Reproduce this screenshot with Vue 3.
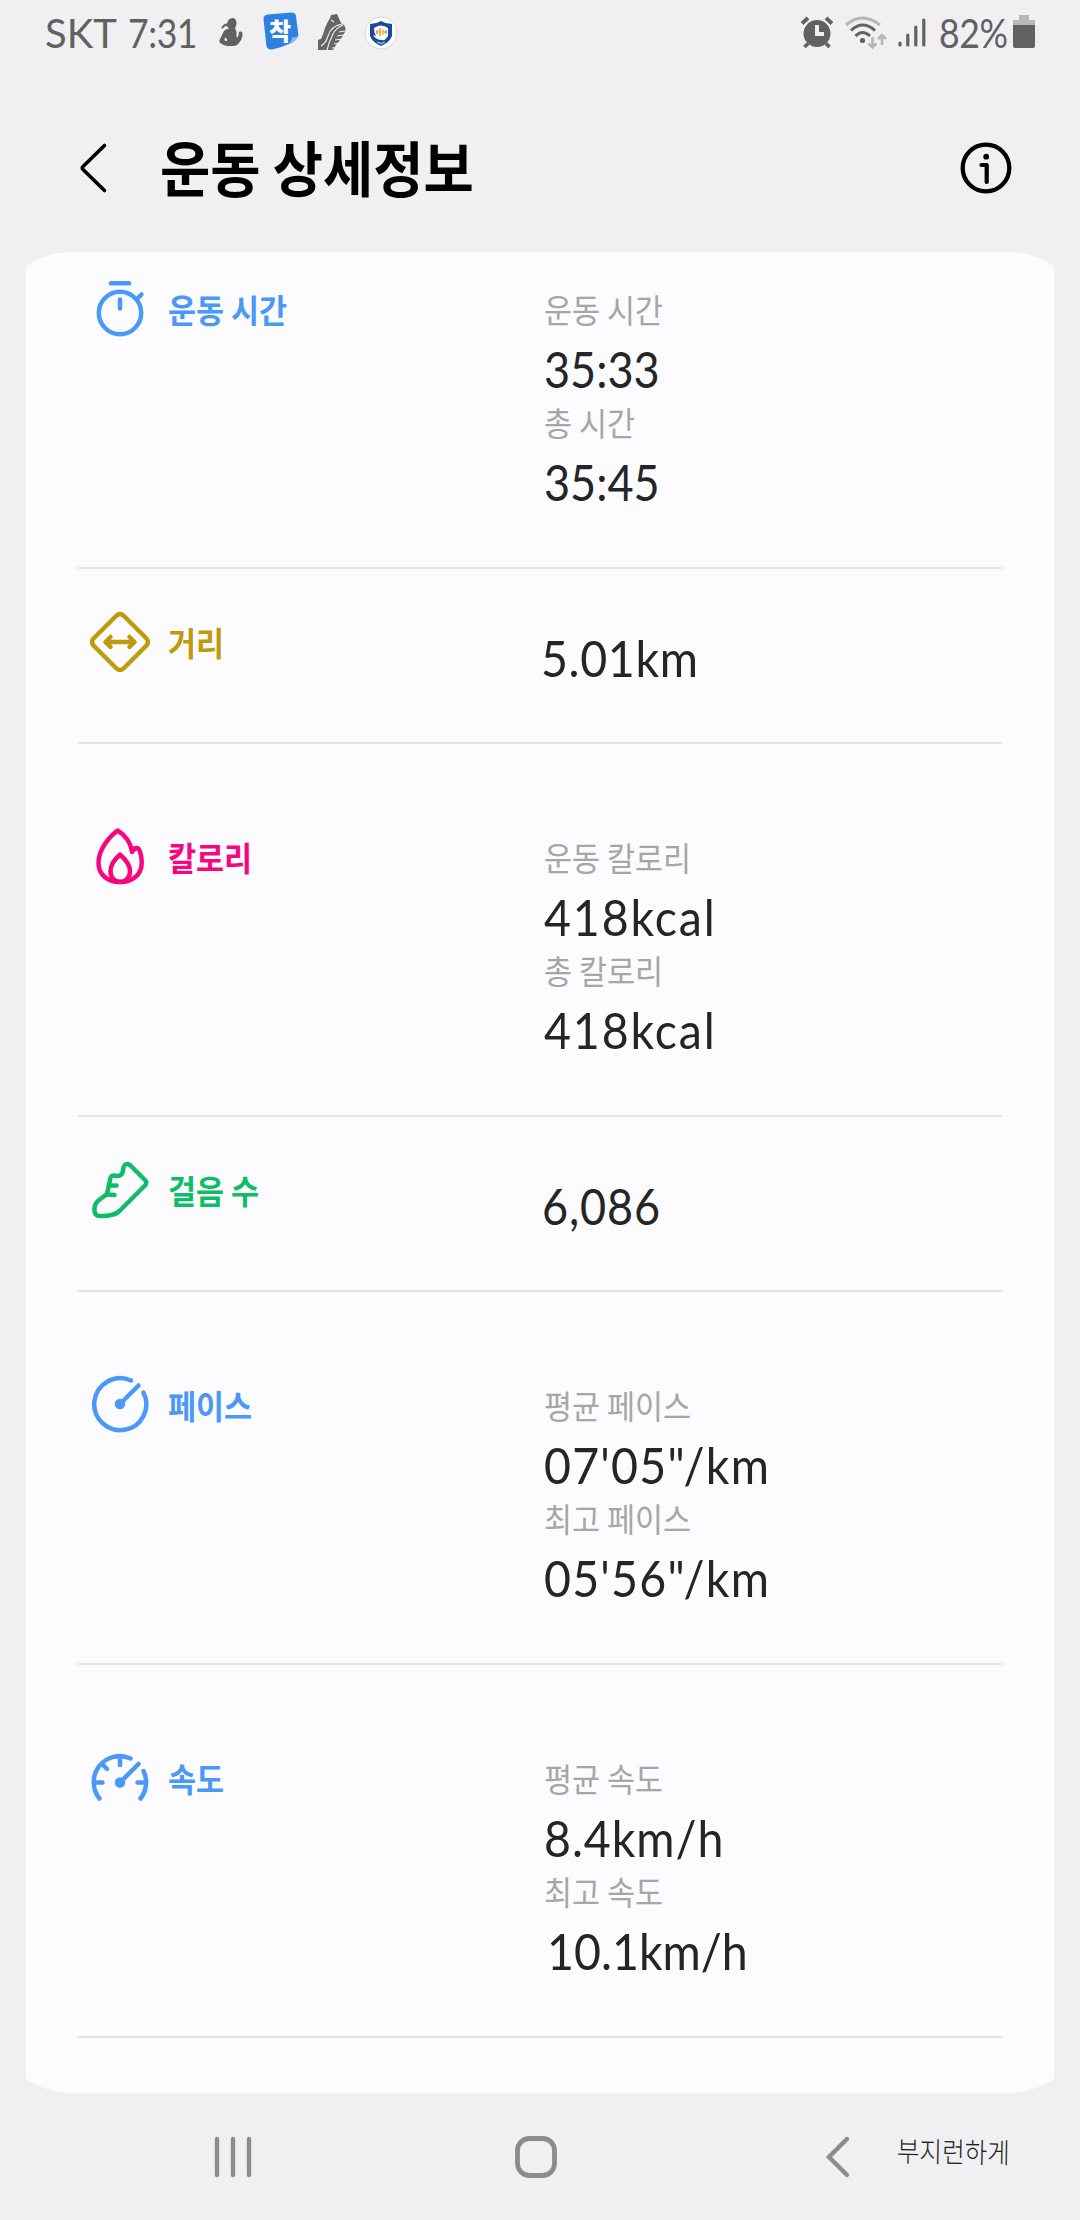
<script setup>
const rows = [
  {
    id: 'time', name: '운동 시간', color: '#4a98f7', first: true,
    items: [
      { label: '운동 시간', value: '35:33', scale: 0.9, spacing: 0 },
      { label: '총 시간', value: '35:45', scale: 0.9, spacing: 0 },
    ],
  },
  { id: 'distance', name: '거리', color: '#bd9b0a', items: [{ value: '5.01km', scale: 0.93, spacing: 0.7, shift: -3 }] },
  {
    id: 'calories', name: '칼로리', color: '#f7077e',
    items: [
      { label: '운동 칼로리', value: '418kcal', scale: 0.93, spacing: 2 },
      { label: '총 칼로리', value: '418kcal', scale: 0.93, spacing: 2 },
    ],
  },
  { id: 'steps', name: '걸음 수', color: '#0fbd68', items: [{ value: '6,086', scale: 0.9, spacing: 1, shift: -2 }] },
  {
    id: 'pace', name: '페이스', color: '#4a98f7',
    items: [
      { label: '평균 페이스', value: '07\'05"/km', scale: 0.93, spacing: 1.3 },
      { label: '최고 페이스', value: '05\'56"/km', scale: 0.93, spacing: 1.3 },
    ],
  },
  {
    id: 'speed', name: '속도', color: '#4a98f7',
    items: [
      { label: '평균 속도', value: '8.4km/h', scale: 0.93, spacing: 1 },
      { label: '최고 속도', value: '10.1km/h', scale: 0.93, spacing: 0, shift: 3 },
    ],
  },
]
</script>

<template>
  <div class="screen">
    <div class="status">
      <span class="carrier">SKT</span>
      <span class="clock">7:31</span>
      <svg class="s-person" width="24" height="29" viewBox="0 0 24 29" fill="#616161">
        <path d="M9 3C10 .8 12 0 13.500 0C16 0 17.500 2 17.500 5C17.500 8 16.500 9 16 10.500C17 12 18 14 17.500 16.500C17.300 18 17.500 19 18.500 19.500C19.800 18 19.500 16 20 14C21 13 23.500 13.500 23.500 15C23.800 20 21.500 23 19.500 25.500C17.500 28.500 14 28 11 28C7 28 5 27.500 3 26C0 25 0 23 1 21L4.500 14C5.500 11.500 8 11 10 10.500L8.500 8.500L6 8C5 10 4 10.500 2.500 10.500C3 8 4 6 8 5.500ZM6.500 19.500C5 21 5 22 6.500 23C8 23.500 8.500 22 8 21Z" fill-rule="evenodd" />
      </svg>
      <span class="sticker">
        <svg width="36" height="38" viewBox="0 0 36 38">
          <path d="M5 2.500L28 .5Q32.500 .2 33 4L35.500 24Q28 34 9 37.500Q4 38 3.300 33L.5 7Q.3 3 5 2.500Z" fill="#2f80df" />
          <path d="M35.500 24Q33 30 25 33Q29 29 29.500 25Q32 26 35.500 24Z" fill="#7dbcff" />
        </svg>
        <b>착</b>
      </span>
      <svg class="s-shoe" width="29" height="38" viewBox="0 0 29 38">
        <path d="M1 37V28Q1 26 4 26Q6 22 8 15Q10 10 13 5L14 2L20 1L24 10Q30 13 28 19Q24 27 19 32L16 37Z" fill="#666" />
        <g fill="none" stroke="#efeff1" stroke-width="1.100">
          <path d="M4 33Q9 30 11 23Q14 13 25 11M10 37Q12 29 16 21Q19 15 26 12M14 7L17 9" />
          <path d="M15 35L22 34M17 31L23 30M18 27L25 26M20 23L27 22M22 19L28 18" />
        </g>
      </svg>
      <svg class="s-shield" width="34" height="34" viewBox="0 0 34 34">
        <circle cx="17" cy="17" r="16" fill="#fff" stroke="#d9d9dc" />
        <path d="M17 5Q22 8 28 8V20Q26 26 17 30Q8 26 6 20V8Q12 8 17 5Z" fill="#1b4a9c" />
        <path d="M10 12Q17 7 24 12V20Q21 25 18 24Q12 24 9 19L12 20Q10 17 10 12Z" fill="#fff" />
        <g fill="none" stroke-width="1.300">
          <path d="M13 14V18M16 12V20" stroke="#e57b52" />
          <path d="M19 13V19M12 16H23" stroke="#eeb64a" />
          <path d="M22 14V18" stroke="#58b894" />
          <path d="M13 26L17 27.500L21 26" stroke="#9fc4f0" />
        </g>
      </svg>
      <div class="status-right">
        <svg width="34" height="34" viewBox="0 0 34 34" fill="none" stroke="#616161">
          <circle cx="17" cy="17.500" r="13.500" fill="#616161" stroke="none" />
          <path d="M2 7.500L8 2M26 2L32 7.500M4.500 31L8 27.500M29.500 31L26 27.500" stroke-width="3.800" />
          <path d="M17 9V18H24" stroke="#f0f0f2" stroke-width="4" />
        </svg>
        <svg class="wifi" width="44" height="34" viewBox="0 0 44 34" fill="none" stroke-width="3">
          <path d="M2 9Q18 -5 36 9" stroke="#b7b7b8" />
          <path d="M7 14.500Q18.500 3.500 31 14.500M11.500 20Q18.500 13 26 20" stroke="#616161" />
          <circle cx="18.500" cy="24.500" r="2.600" fill="#616161" />
          <path d="M28.500 21V31M24.500 27.500L28.500 31.500L32.500 27.500M38 29V19.500M34 23L38 19L42 23" stroke="#b7b7b8" stroke-width="2.600" />
        </svg>
        <svg class="signal" width="28" height="32" viewBox="0 0 28 32" stroke="#616161" stroke-width="3.200" stroke-linecap="round">
          <path d="M2 26V28M9.800 18V28M17.800 10V28M25.800 3V28" />
        </svg>
        <span class="percent">82%</span>
        <svg class="battery" width="22" height="33" viewBox="0 0 22 33">
          <path d="M6 0H16V5H22V11H0V5H6Z" fill="#b9b9ba" />
          <path d="M0 10H22V31Q22 33 20 33H2Q0 33 0 31Z" fill="#616161" />
        </svg>
      </div>
    </div>

    <header class="header">
      <svg class="back" width="30" height="54" viewBox="0 0 30 54">
        <path d="M26.500 4.500L5 25.500Q3.500 27 5 28.500L26.500 49.500" fill="none" stroke="#000" stroke-width="3.600" stroke-linecap="round" />
      </svg>
      <h1>운동 상세정보</h1>
      <svg class="info" width="52" height="52" viewBox="0 0 52 52" fill="none" stroke="#000" stroke-linecap="round" stroke-linejoin="round">
        <circle cx="26" cy="26" r="23.300" stroke-width="4.300" />
        <circle cx="26.200" cy="14.700" r="2.900" fill="#000" stroke="none" />
        <path d="M21.500 23H26.700V40" stroke-width="4.200" />
      </svg>
    </header>

    <main class="card">
      <section v-for="row in rows" :key="row.id" class="row" :class="{ single: row.items.length === 1, first: row.first }">
        <div class="head" :style="{ color: row.color }">
          <svg width="60" height="60" viewBox="0 0 60 60" fill="none" stroke="currentColor" stroke-width="4.500" stroke-linecap="round" stroke-linejoin="round">
            <template v-if="row.id === 'time'">
              <circle cx="30" cy="34" r="21.200" />
              <path d="M21 4.300H39M30 20.500V29.500M47 20L51.500 15.500" />
            </template>
            <template v-else-if="row.id === 'distance'">
              <path d="M26 4L4 26Q0 30 4 34L26 56Q30 60 34 56L56 34Q60 30 56 26L34 4Q30 0 26 4Z" />
              <path d="M15.500 30H44.500M20.500 25L15.500 30L20.500 35M39.500 25L44.500 30L39.500 35" />
            </template>
            <template v-else-if="row.id === 'calories'">
              <path d="M27.600 3.500C20 9 8.500 22 8.500 36C8.500 48 18 55 30 55C42 55 51.700 48 51.700 36C51.700 29 50.500 25 48.500 21.500C46 20.500 43.500 22 42 25C41 16 35 8 27.600 3.500Z" />
              <path d="M30 27.500C25 32 20.500 37 20.500 44C20.500 51 25 55 30 55C35 55 40 51 40 44C40 37 35 32 30 27.500Z" />
            </template>
            <template v-else-if="row.id === 'steps'">
              <path d="M40.500 5.500L55 20Q57.500 22.500 55 25.500L30 50.500Q27 54 21 55C17 56 13 56 9 56Q5 55.500 4.500 51C4 46 5 43 9 40L17 34L20 20Q20.500 15 24 15.500C29 17 33 15 33 10C33.500 4 37 2.500 40.500 5.500Z" />
              <path d="M19.500 25.500H26.500M17.500 34.500L24.500 35" />
            </template>
            <template v-else-if="row.id === 'pace'">
              <path d="M41 5.500A26 26 0 1 0 53.500 17.500" />
              <path d="M30 29L48.500 10.500" />
              <circle cx="30" cy="29" r="3" fill="currentColor" />
            </template>
            <template v-else>
              <path d="M9.500 50.500A26 26 0 0 1 40.500 10.500M53.500 23A26 26 0 0 1 50.500 50.500" />
              <path d="M30 9.500V17M13 17L17 21M4.500 34.500H12.500M47.500 34.500H55.500M30 34.500L48.500 16" />
              <circle cx="30" cy="34.500" r="3" fill="currentColor" />
            </template>
          </svg>
          <span>{{ row.name }}</span>
        </div>
        <div class="data">
          <template v-for="item in row.items" :key="item.label">
            <div v-if="item.label" class="label">{{ item.label }}</div>
            <div
              class="value"
              :style="{ letterSpacing: item.spacing + 'px', marginLeft: (item.shift || 0) + 'px', transform: `scaleX(${item.scale})` }"
            >{{ item.value }}</div>
          </template>
        </div>
      </section>
    </main>

    <nav class="nav">
      <svg class="recents" width="40" height="44" viewBox="0 0 40 44" stroke="#8c8c8c" stroke-width="4.400" stroke-linecap="round">
        <path d="M3 4V40M19 4V40M35 4V40" />
      </svg>
      <svg class="home" width="44" height="44" viewBox="0 0 44 44">
        <rect x="3.500" y="3.500" width="37" height="37" rx="12" fill="none" stroke="#8c8c8c" stroke-width="4.800" />
      </svg>
      <svg class="nav-back" width="26" height="44" viewBox="0 0 26 44">
        <path d="M22 4L4 22L22 40" fill="none" stroke="#8c8c8c" stroke-width="4.400" stroke-linecap="round" />
      </svg>
      <span class="signature">부지런하게</span>
    </nav>
  </div>
</template>

<style>
body { background: #f0f0f2; }
</style>

<style scoped>
.screen {
  width: 1080px;
  height: 2220px;
  display: flex;
  flex-direction: column;
  background: #f0f0f2;
  font-family: "Noto Sans CJK KR", sans-serif;
  white-space: nowrap;
  overflow: hidden;
}
.status {
  height: 66px;
  display: flex;
  align-items: center;
  padding: 0 45px 0 45px;
  color: #616161;
  font: 40px/66px Lato, sans-serif;
}
.carrier { width: 83px; letter-spacing: 0; }
.clock { width: 91px; letter-spacing: -.5px; transform: scaleX(.89); transform-origin: 0 50%; }
.s-person { margin-top: -2px; }
.sticker { position: relative; width: 36px; height: 38px; margin-left: 20px; margin-top: -4px; }
.sticker svg { display: block; }
.sticker b {
  position: absolute;
  left: 6px;
  top: 4px;
  font: 900 24px/28px "Noto Sans CJK KR", sans-serif;
  color: #fff;
}
.s-shoe { margin-left: 18px; margin-top: -3px; }
.s-shield { margin-left: 18px; margin-top: -1px; }
.status-right { margin-left: auto; display: flex; align-items: center; }
.wifi { margin-left: 10px; }
.signal { margin-left: 10px; }
.percent { margin-left: 13px; width: 74px; letter-spacing: -.5px; transform: scaleX(.89); transform-origin: 0 50%; }
.battery { margin-top: -3px; }

.header {
  height: 186px;
  display: flex;
  align-items: flex-start;
  padding: 0 68px 0 78px;
}
.back { margin-top: 75px; }
h1 {
  margin: 60px 0 0 52px;
  font-size: 54.600px;
  line-height: 80px;
  font-weight: 700;
  color: #000;
  transform: scaleY(1.11);
}
.info { margin: 76px 0 0 auto; }

.card {
  position: relative;
  height: 1841px;
  margin: 0 26px;
  padding: 0 52px;
  box-sizing: border-box;
  overflow: hidden;
}
.card::before {
  content: "";
  position: absolute;
  inset: 0 -36px;
  border-radius: 82px;
  background: #fcfcfe;
}
.row {
  position: relative;
  display: flex;
  height: 373px;
  box-sizing: border-box;
  border-bottom: 2px solid #e5e5e7;
  padding-left: 12px;
}
.row.first { height: 317px; }
.row.single { height: 175px; }
.head {
  width: 454px;
  height: 60px;
  margin-top: 83px;
  display: flex;
  gap: 18px;
  font-size: 30.500px;
  font-weight: 700;
  line-height: 60px;
}
.head span { transform: scaleY(1.08); }
.single .head { margin-top: 43px; }
.first .head { margin-top: 27px; }
.data { padding-top: 90px; }
.single .data { padding-top: 56px; }
.first .data { padding-top: 34px; }
.label {
  height: 50px;
  line-height: 47px;
  font-size: 30.500px;
  color: #a6a6a6;
  transform: scaleY(1.08);
}
.value {
  height: 63px;
  line-height: 67px;
  font-family: Lato, sans-serif;
  font-size: 50px;
  color: #252528;
  transform-origin: 0 50%;
}

.nav { flex: 1; display: flex; align-items: flex-start; padding-top: 42px; }
.recents { margin-left: 214px; }
.home { margin-left: 260px; }
.nav-back { margin-left: 267px; }
.signature {
  margin: -2px 0 0 46px;
  font-size: 24.500px;
  font-weight: 300;
  line-height: 36px;
  color: #222;
  transform: rotate(1deg) scaleY(1.15);
}
</style>
